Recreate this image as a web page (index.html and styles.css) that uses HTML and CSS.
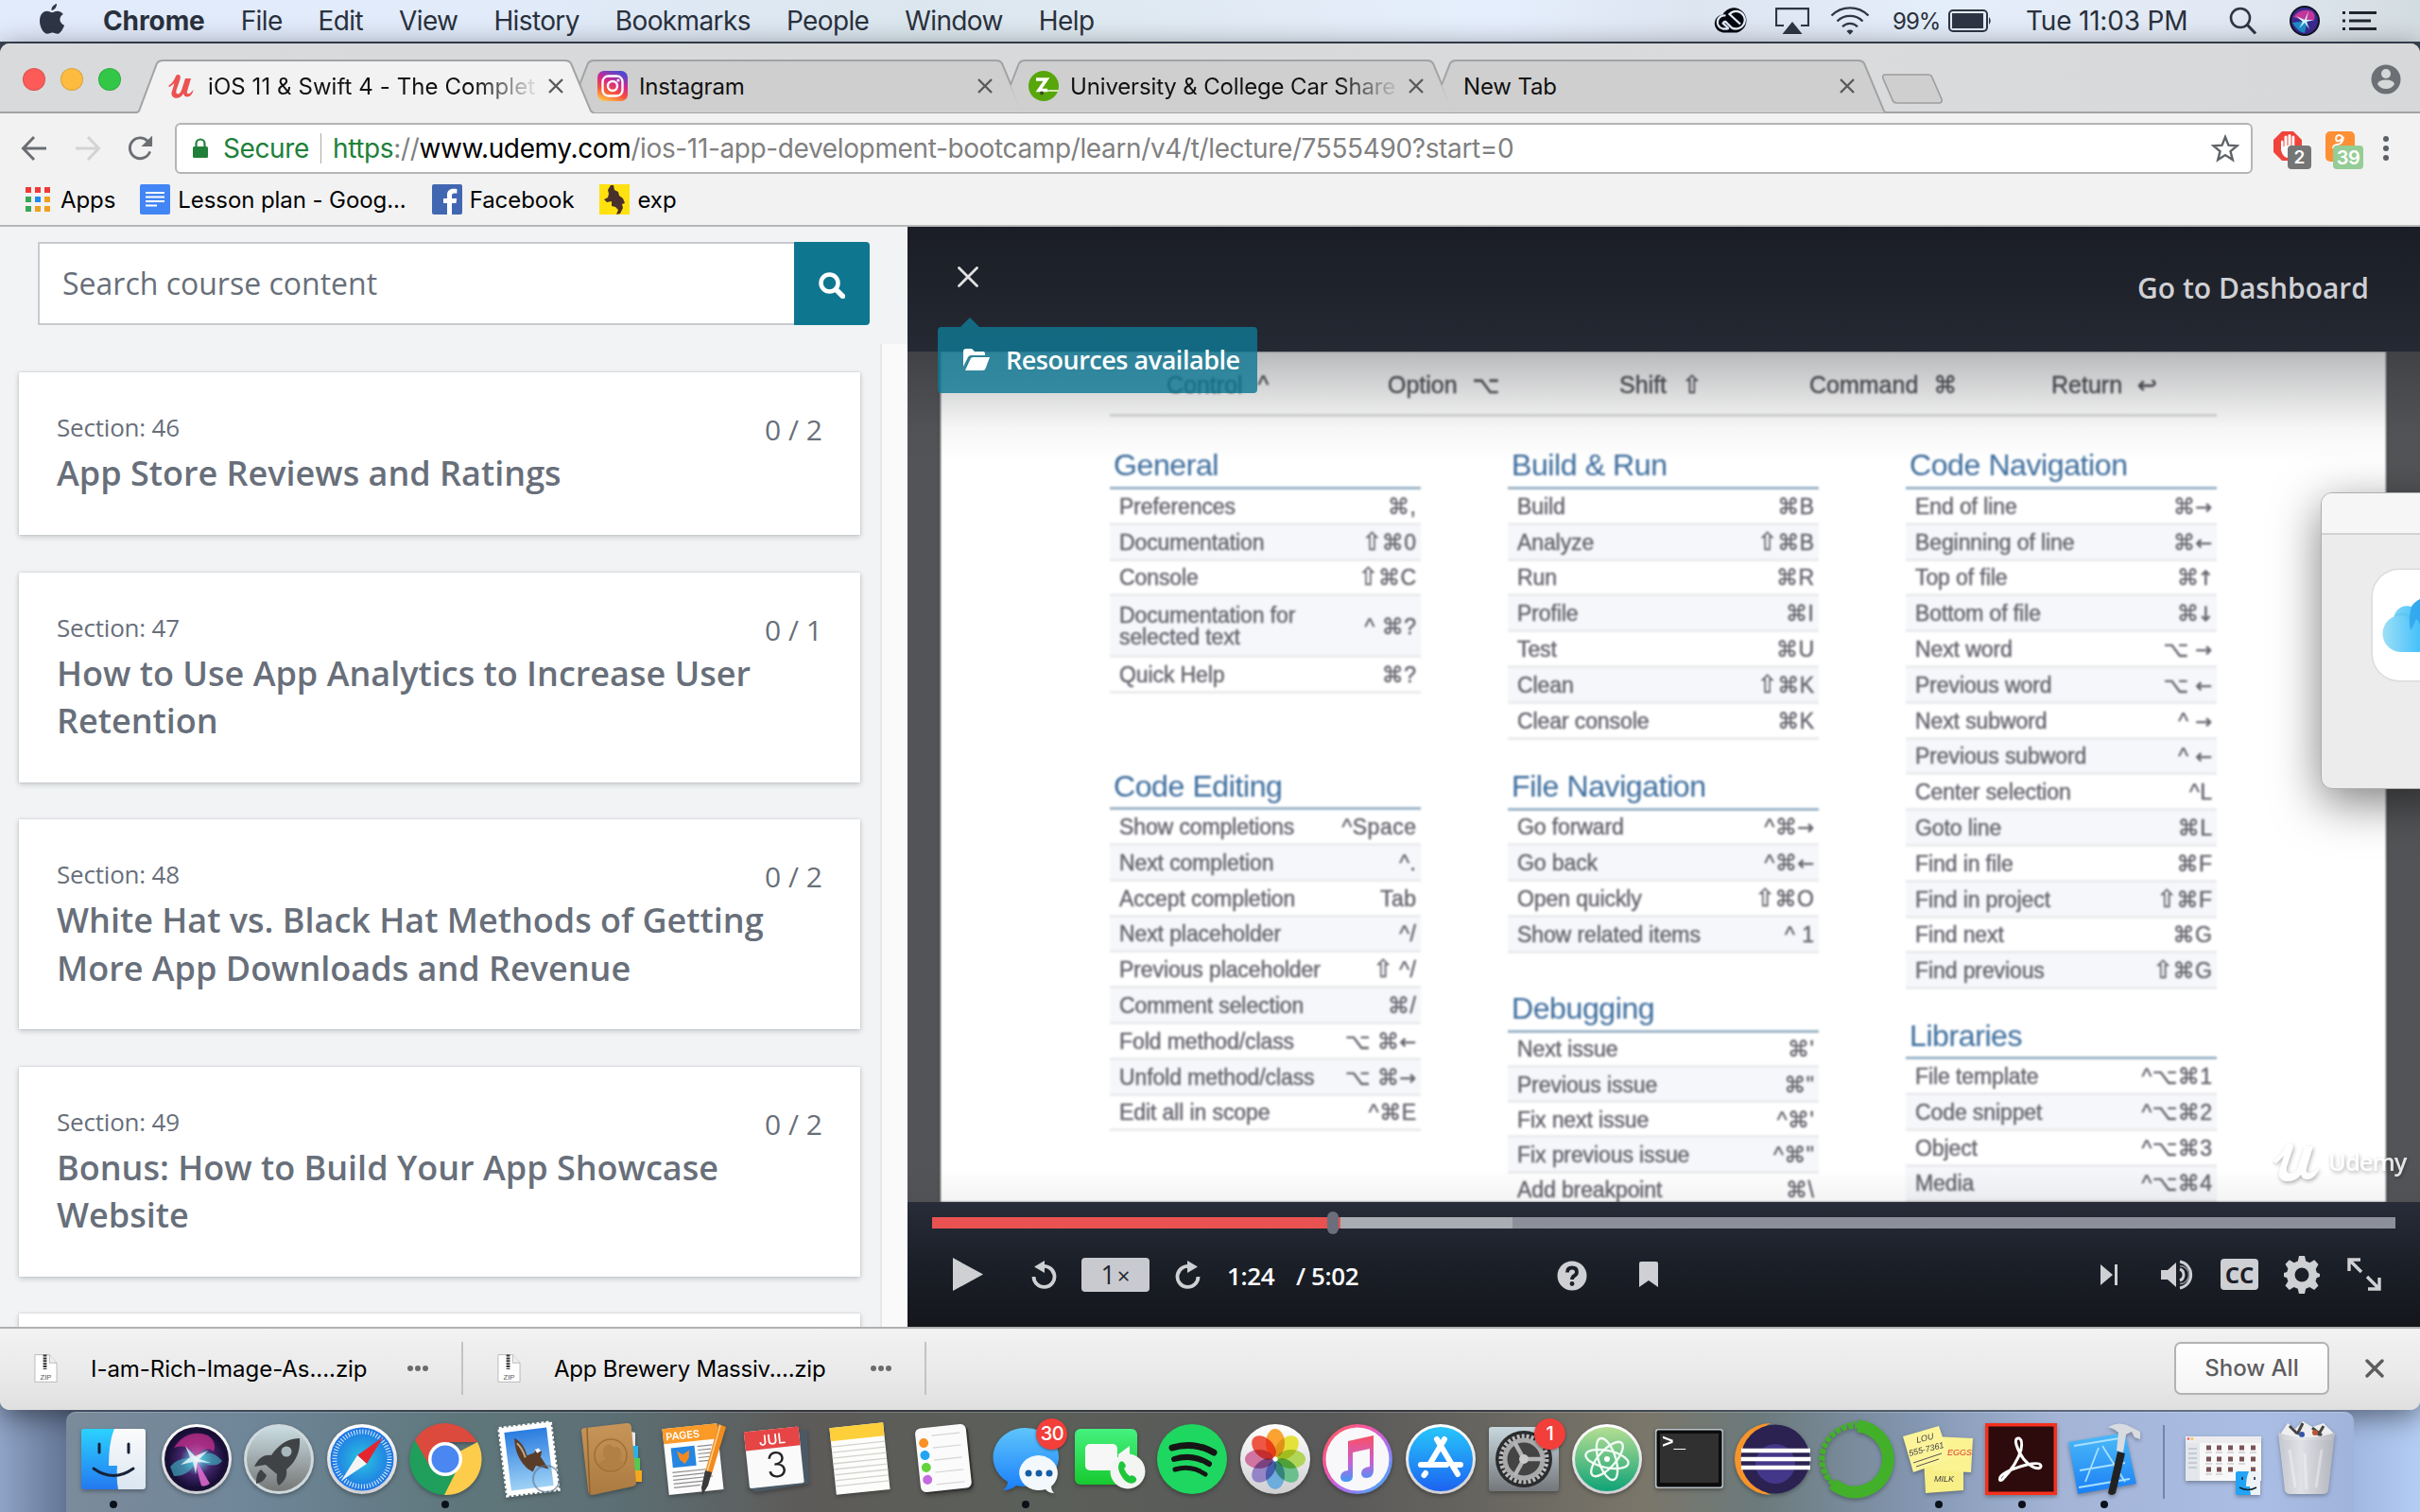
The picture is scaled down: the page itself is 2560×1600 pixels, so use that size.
FILE: index.html
```html
<!DOCTYPE html>
<html lang="en">
<head>
<meta charset="utf-8">
<title>iOS 11 &amp; Swift 4 - The Complete iOS App Development Bootcamp</title>
<link rel="stylesheet" href="styles.css">
</head>
<body>
<svg width="0" height="0" class="defs">
  <defs>
    <linearGradient id="g-finder" x1="0" y1="0" x2="0" y2="1"><stop offset="0" stop-color="#2bd2ff"/><stop offset="1" stop-color="#2479f0"/></linearGradient>
    <linearGradient id="g-face" x1="0" y1="0" x2="0" y2="1"><stop offset="0" stop-color="#fbfbfc"/><stop offset="1" stop-color="#dbe6f1"/></linearGradient>
    <radialGradient id="g-siri"><stop offset="0" stop-color="#e9fbff"/><stop offset=".2" stop-color="#5f9fc8"/><stop offset=".55" stop-color="#43256b"/><stop offset="1" stop-color="#150d33"/></radialGradient>
    <linearGradient id="g-rocket" x1="0" y1="0" x2="0" y2="1"><stop offset="0" stop-color="#c9dce2"/><stop offset="1" stop-color="#767776"/></linearGradient>
    <radialGradient id="g-safari2"><stop offset="0" stop-color="#29c5e0"/><stop offset="1" stop-color="#1f74e4"/></radialGradient>
    <linearGradient id="g-sky" x1="0" y1="0" x2="0" y2="1"><stop offset="0" stop-color="#2a7ce0"/><stop offset="1" stop-color="#9fd2f5"/></linearGradient>
    <linearGradient id="g-book" x1="0" y1="0" x2="0" y2="1"><stop offset="0" stop-color="#c79558"/><stop offset="1" stop-color="#ab7a41"/></linearGradient>
    <linearGradient id="g-msg" x1="0" y1="0" x2="0" y2="1"><stop offset="0" stop-color="#5ec5fb"/><stop offset="1" stop-color="#1a7ffb"/></linearGradient>
    <linearGradient id="g-ft" x1="0" y1="0" x2="0" y2="1"><stop offset="0" stop-color="#45f27f"/><stop offset="1" stop-color="#17c92f"/></linearGradient>
    <linearGradient id="g-ring" x1="0" y1="0" x2="1" y2="1"><stop offset="0" stop-color="#fb5f4e"/><stop offset=".35" stop-color="#f556a3"/><stop offset=".6" stop-color="#b06bf2"/><stop offset="1" stop-color="#25c1fb"/></linearGradient>
    <linearGradient id="g-note" x1="0" y1="0" x2="0" y2="1"><stop offset="0" stop-color="#fb4f61"/><stop offset=".6" stop-color="#c561d8"/><stop offset="1" stop-color="#3d9cf8"/></linearGradient>
    <linearGradient id="g-store" x1="0" y1="0" x2="0" y2="1"><stop offset="0" stop-color="#27c6fb"/><stop offset="1" stop-color="#1c63f0"/></linearGradient>
    <linearGradient id="g-pref" x1="0" y1="0" x2="0" y2="1"><stop offset="0" stop-color="#c8d7de"/><stop offset="1" stop-color="#74777b"/></linearGradient>
    <linearGradient id="g-atom" x1="0" y1="0" x2="0" y2="1"><stop offset="0" stop-color="#b5de93"/><stop offset="1" stop-color="#10a377"/></linearGradient>
    <linearGradient id="g-blue" x1="0" y1="0" x2="0" y2="1"><stop offset="0" stop-color="#4dbbf8"/><stop offset="1" stop-color="#1a7ff5"/></linearGradient>
    <linearGradient id="g-insta" x1=".2" y1="1" x2=".6" y2="0"><stop offset="0" stop-color="#fdc84f"/><stop offset=".35" stop-color="#f7513b"/><stop offset=".65" stop-color="#d2278f"/><stop offset="1" stop-color="#5148d0"/></linearGradient>
    <linearGradient id="g-can" x1="0" y1="0" x2="1" y2="0"><stop offset="0" stop-color="#c9cbd0"/><stop offset=".4" stop-color="#e6e7ea"/><stop offset="1" stop-color="#b5b7bd"/></linearGradient>
    <linearGradient id="g-cloud" x1="0" y1="0" x2="1" y2="0"><stop offset="0" stop-color="#9ddff5"/><stop offset="1" stop-color="#45c1fc"/></linearGradient>
    <linearGradient id="g-edge" x1="0" y1="0" x2="0" y2="1"><stop offset="0" stop-color="#fff"/><stop offset="1" stop-color="#cfcfd2"/></linearGradient>
  </defs>
</svg>

<header class="menubar">
  <svg class="apple" viewBox="0 0 26 32"><path d="M18 0c.3 3-2.300 7-5.500 7C12 4 15 .5 18 0zM13 9.300c1.500 0 3-1.600 5.800-1.600 2.400 0 4.700 1.300 6 3.400-5 3-4.300 9.600 1.200 11.600-1.500 4.300-4.300 9.100-7.300 9.100-2 0-2.800-1.300-5.300-1.300s-3.400 1.300-5.300 1.300C4 31.800 0 24.500 0 18.500 0 11 4 7.800 7.700 7.800c2.400 0 4.200 1.500 5.300 1.500z" fill="#2e3645"/></svg>
  <nav class="menus"><b>Chrome</b><span>File</span><span>Edit</span><span>View</span><span>History</span><span>Bookmarks</span><span>People</span><span>Window</span><span>Help</span></nav>
  <div class="status">
    <svg class="s-cc" width="40" height="28" viewBox="0 0 40 28"><path d="M10.500 8.200A13.300 13.300 0 1 1 25.500 27.500H10.500a9.700 9.700 0 0 1 0-19.300z" fill="#05070f"/><path d="M13.500 9.500A6.800 6.800 0 0 0 10.500 23.500H15q2 0 .5-1.500L11 17.800M10.500 18.500a2.500 2.500 0 0 1 3-2.500l6.500 6.500q1.500 1 4.500 1a9.300 9.300 0 1 0-7-15.500L29 18.500" fill="none" stroke="#e4edfb" stroke-width="2.300"/></svg>
    <svg class="s-air" width="36" height="28" viewBox="0 0 36 28"><path d="M9 19H1V1.200h34V19H27" fill="none" stroke="#2e3645" stroke-width="2.200"/><path d="M18 15l10.500 13h-21z" fill="#2e3645"/></svg>
    <svg class="s-wifi" width="42" height="30" viewBox="0 0 42 30"><g fill="none" stroke="#2e3645" stroke-width="2.400"><path d="M1.500 9.500a27.500 27.500 0 0 1 39 0"/><path d="M7.500 15.500a19 19 0 0 1 27 0"/><path d="M13 21.300a11 11 0 0 1 16 0"/></g><path d="M17.500 26a5 5 0 0 1 7 0l-3.500 3.800z" fill="#2e3645"/></svg>
    <span class="s-pct">99%</span>
    <svg class="s-bat" width="47" height="24" viewBox="0 0 47 24"><rect x="1" y="1" width="40" height="22" rx="4" fill="none" stroke="#2e3645" stroke-width="2"/><rect x="4" y="4" width="33" height="16" fill="#2e3645"/><path d="M43 8q3.500 4 0 8z" fill="#2e3645"/></svg>
    <span class="s-time">Tue 11:03 PM</span>
    <svg class="s-find" width="30" height="30" viewBox="0 0 30 30"><circle cx="12" cy="12" r="10" fill="none" stroke="#2e3645" stroke-width="2.600"/><path d="M19 19l9 9.500" stroke="#2e3645" stroke-width="3.200"/></svg>
    <svg class="s-siri" width="32" height="32" viewBox="0 0 32 32"><circle cx="16" cy="16" r="16" fill="#11131f"/><circle cx="16" cy="16" r="14" fill="#3a2a8f"/><path d="M4 12Q12 2 24 6q4 4 2 9l-10 1z" fill="#c2379a"/><path d="M3 18q6 10 13 11l3-13z" fill="#1d8ec9"/><path d="M7 11l9 4 4-9-2 9 8 0-8 2 3 8-5-7-6 6 4-7z" fill="#d8f7ff"/></svg>
    <svg class="s-list" width="36" height="20" viewBox="0 0 36 20"><path d="M0 1.500h3M0 10h3M0 18.500h3M7 1.500h29M7 10h23M7 18.500h29" stroke="#20252f" stroke-width="3"/></svg>
  </div>
</header>

<main class="window">
  <div class="tabstrip">
    <div class="lights"><i class="red"></i><i class="amber"></i><i class="green"></i></div>
    <div class="tab active">
      <svg class="shape" viewBox="0 0 484 57"><path d="M0 57Q3 56 4 52L22 4Q24 1 28 1H454Q458 1 460 4L480 52Q481 56 484 57z" fill="#f2f2f2"/><path d="M0 56Q3 56 4 52L22 4Q24 1 28 1H454Q458 1 460 4L480 52Q481 56 484 56" fill="none" stroke="#a2a3a4" stroke-width="2"/></svg>
      <svg class="fav" viewBox="0 0 32 32"><path d="M2 16C6 14 9 8 10 5.500c2-2.500 6-2 4.500 3.500l-4 11.500c-1 5.500 3.500 5 5.500 0L20 8h6l-4 13.500c-1 3.500 2.500 4 6.500-1.500-1 8-9 10-10.500 4-3 7-13.500 6-12.500-1l3-10-5 4z" fill="#ec5252"/></svg>
      <span class="label fade">iOS 11 &amp; Swift 4 - The Complet</span>
      <svg class="x" viewBox="0 0 16 16"><path d="M1 1l14 14M15 1L1 15" /></svg>
    </div>
    <div class="tab">
      <svg class="shape" viewBox="0 0 484 57"><path d="M13 27L22 4Q24 1 28 1H454Q458 1 460 4L480 52Q481 56 484 56H24z" fill="#cfcfcf"/><path d="M13 27L22 4Q24 1 28 1H454Q458 1 460 4L480 52Q481 56 484 56" fill="none" stroke="#a2a3a4" stroke-width="2"/></svg>
      <svg class="fav" viewBox="0 0 32 32"><rect width="32" height="32" rx="7" fill="url(#g-insta)"/><g fill="none" stroke="#fff" stroke-width="2.400"><rect x="5.500" y="5.500" width="21" height="21" rx="6"/><circle cx="16" cy="16" r="5"/></g><circle cx="22" cy="10" r="1.600" fill="#fff"/></svg>
      <span class="label">Instagram</span>
      <svg class="x" viewBox="0 0 16 16"><path d="M1 1l14 14M15 1L1 15" /></svg>
    </div>
    <div class="tab">
      <svg class="shape" viewBox="0 0 484 57"><path d="M13 27L22 4Q24 1 28 1H454Q458 1 460 4L480 52Q481 56 484 56H24z" fill="#cfcfcf"/><path d="M13 27L22 4Q24 1 28 1H454Q458 1 460 4L480 52Q481 56 484 56" fill="none" stroke="#a2a3a4" stroke-width="2"/></svg>
      <svg class="fav" viewBox="0 0 32 32"><circle cx="16" cy="16" r="16" fill="#57a60a"/><path d="M8 9h11L11 20.500h9" fill="none" stroke="#fff" stroke-width="3.600"/><path d="M20 21h12" stroke="#cfe6b4" stroke-width="2"/><circle cx="14" cy="23.500" r="2" fill="#3b4a2a"/></svg>
      <span class="label fade">University &amp; College Car Share</span>
      <svg class="x" viewBox="0 0 16 16"><path d="M1 1l14 14M15 1L1 15" /></svg>
    </div>
    <div class="tab plain">
      <svg class="shape" viewBox="0 0 484 57"><path d="M13 27L22 4Q24 1 28 1H454Q458 1 460 4L480 52Q481 56 484 56H24z" fill="#cfcfcf"/><path d="M13 27L22 4Q24 1 28 1H454Q458 1 460 4L480 52Q481 56 484 56" fill="none" stroke="#a2a3a4" stroke-width="2"/></svg>
      <span class="label">New Tab</span>
      <svg class="x" viewBox="0 0 16 16"><path d="M1 1l14 14M15 1L1 15" /></svg>
    </div>
    <svg class="newtab" viewBox="0 0 66 32"><path d="M4 1H50q3 0 4 3L64 27q1 4-3 4H17q-4 0-5-3L2 5Q1 1 4 1z" fill="#cfcfcf" stroke="#9d9d9e" stroke-width="1.600"/></svg>
    <svg class="person" viewBox="0 0 32 32"><circle cx="16" cy="16" r="15.500" fill="#6c7075"/><circle cx="16" cy="10" r="5" fill="#d6d7d9"/><path d="M7 21q1-4.500 9-4.500t9 4.500q-3 5-9 5t-9-5z" fill="#d6d7d9"/></svg>
  </div>

  <div class="toolbar">
    <svg class="nav-i" viewBox="0 0 28 28"><path d="M27 14H3M14 2L2.500 14 14 26" fill="none" stroke="#6b6e72" stroke-width="3"/></svg>
    <svg class="nav-i fwd" viewBox="0 0 28 28"><path d="M1 14h24M14 2l11.500 12L14 26" fill="none" stroke="#d2d3d4" stroke-width="3"/></svg>
    <svg class="nav-i rel" viewBox="0 0 28 28"><path d="M24.500 17.500A11.300 11.300 0 1 1 22 6" fill="none" stroke="#6b6e72" stroke-width="3"/><path d="M27 0v12H15z" fill="#6b6e72"/></svg>
    <div class="omnibox">
      <svg class="lock" viewBox="0 0 16 22"><rect y="9" width="16" height="12" rx="1.500" fill="#208039"/><path d="M3.500 10V6a4.500 4.500 0 0 1 9 0v4" fill="none" stroke="#208039" stroke-width="2.200"/></svg>
      <span class="secure">Secure</span><i class="bar"></i>
      <span class="url"><em>https</em>://<b>www.udemy.com</b>/ios-11-app-development-bootcamp/learn/v4/t/lecture/7555490?start=0</span>
      <svg class="star" viewBox="0 0 30 30"><path d="M15 3l3.400 8.600 9.200.6-7.100 5.900 2.300 9L15 22.100 7.200 27.100l2.300-9L2.400 12.200l9.200-.6z" fill="none" stroke="#5f6368" stroke-width="2.400"/></svg>
    </div>
    <span class="ext"><svg viewBox="0 0 32 32"><path d="M9 0h12l9 9v13l-9 9H9l-9-9V9z" fill="#f0443b"/><path d="M8 20v-9q0-1.500 1.200-1.500T10.500 11v5h1V6q0-1.500 1.500-1.500T14.500 6v9h1V4.500Q15.500 3 17 3t1.500 1.500V15h1V6q0-1.500 1.400-1.500T22.300 6v13q0 9-7 9-5 0-7.300-8z" fill="#fff"/></svg><b>2</b></span>
    <span class="ext orange"><svg viewBox="0 0 32 32"><rect width="31" height="32" rx="5" fill="#ff8f35"/><path d="M18 7a3.500 3.500 0 1 0-6 3q4 1 7-4-1 8-7 8-4 1-4 4" fill="none" stroke="#fff" stroke-width="2"/></svg><b>39</b></span>
    <svg class="dots" viewBox="0 0 6 28"><circle cx="3" cy="4" r="3"/><circle cx="3" cy="14" r="3"/><circle cx="3" cy="24" r="3"/></svg>
  </div>

  <div class="bookmarks">
    <svg class="apps" viewBox="0 0 26 26"><g fill="#f03a37"><path d="M0 0h6v6H0zM10 0h6v6h-6zM20 0h6v6h-6z"/></g><path d="M0 10h6v6H0zM0 20h6v6H0z" fill="#3aa757"/><path d="M10 10h6v6h-6z" fill="#1e8bf0"/><path d="M20 10h6v6h-6zM10 20h6v6h-6zM20 20h6v6h-6z" fill="#f0a01e"/></svg><span>Apps</span>
    <svg class="bm-i doc" viewBox="0 0 32 32"><rect width="32" height="32" rx="2" fill="#4285f4"/><path d="M6 9h20M6 13.500h20M6 18h20M6 22.500h12" stroke="#fff" stroke-width="2.200"/></svg><span>Lesson plan - Goog...</span>
    <svg class="bm-i fb" viewBox="0 0 32 32"><rect width="32" height="32" rx="2" fill="#4267b2"/><path d="M21 32V20h4.500l.7-5H21v-3c0-1.600.6-2.600 2.800-2.600h2.600V5c-.6 0-2-.2-3.800-.2-4 0-6.600 2.400-6.600 6.600V15h-4v5h4v12z" fill="#fff"/></svg><span>Facebook</span>
    <svg class="bm-i wy" viewBox="0 0 32 32"><rect width="32" height="32" fill="#ffe110"/><path d="M12 1l3 0 1 5 4 2 1 4 4 3 2 5-3 1 1 4-3 6-4 1 2-5-3-3-4-1 0-5-5 1-3-3 4-2 1-4-1-4z" fill="#49302a"/></svg><span>exp</span>
  </div>

  <div class="content">
    <aside class="sidebar">
      <div class="search"><div class="field">Search course content</div><div class="go"><svg viewBox="0 0 28 28"><circle cx="11.500" cy="11.500" r="9" fill="none" stroke="#fff" stroke-width="4.500"/><path d="M18.500 18.500l7 7" stroke="#fff" stroke-width="5.500" stroke-linecap="round"/></svg></div></div>
      <div class="scroll">
        <div class="cards">
          <section class="card"><small>Section: 46</small><span class="count">0 / 2</span><h2>App Store Reviews and Ratings</h2></section>
          <section class="card"><small>Section: 47</small><span class="count">0 / 1</span><h2>How to Use App Analytics to Increase User Retention</h2></section>
          <section class="card"><small>Section: 48</small><span class="count">0 / 2</span><h2>White Hat vs. Black Hat Methods of Getting More App Downloads and Revenue</h2></section>
          <section class="card"><small>Section: 49</small><span class="count">0 / 2</span><h2>Bonus: How to Build Your App Showcase Website</h2></section>
          <section class="card"></section>
        </div>
        <div class="track"></div>
      </div>
    </aside>

    <section class="player">
      <header class="p-head">
        <svg class="p-x" viewBox="0 0 22 22"><path d="M1.500 1.500l19 19M20.500 1.500l-19 19" stroke="#e2e2e4" stroke-width="2.800" stroke-linecap="round"/></svg>
        <span>Go to Dashboard</span>
      </header>
      <div class="video">
        <div class="sheet">
          <div class="legend"><span>Control <k>^</k></span><span>Option <k>⌥</k></span><span>Shift <k><u>⇧</u></k></span><span>Command <k>⌘</k></span><span>Return <k>↩</k></span></div>
          <div class="columns">
            <div class="col">
              <h3>General</h3>
              <ul><li>Preferences<k>⌘,</k></li><li>Documentation<k><u>⇧</u>⌘0</k></li><li>Console<k><u>⇧</u>⌘C</k></li><li class="tall"><span>Documentation for<br>selected text</span><k>^ ⌘?</k></li><li>Quick Help<k>⌘?</k></li></ul>
              <h3 class="gap-a">Code Editing</h3>
              <ul><li>Show completions<k>^Space</k></li><li>Next completion<k>^.</k></li><li>Accept completion<k>Tab</k></li><li>Next placeholder<k>^/</k></li><li>Previous placeholder<k><u>⇧</u> ^/</k></li><li>Comment selection<k>⌘/</k></li><li>Fold method/class<k>⌥ ⌘<s>←</s></k></li><li>Unfold method/class<k>⌥ ⌘<s>→</s></k></li><li>Edit all in scope<k>^⌘E</k></li></ul>
            </div>
            <div class="col">
              <h3>Build &amp; Run</h3>
              <ul><li>Build<k>⌘B</k></li><li>Analyze<k><u>⇧</u>⌘B</k></li><li>Run<k>⌘R</k></li><li>Profile<k>⌘I</k></li><li>Test<k>⌘U</k></li><li>Clean<k><u>⇧</u>⌘K</k></li><li>Clear console<k>⌘K</k></li></ul>
              <h3 class="gap-b">File Navigation</h3>
              <ul><li>Go forward<k>^⌘<s>→</s></k></li><li>Go back<k>^⌘<s>←</s></k></li><li>Open quickly<k><u>⇧</u>⌘O</k></li><li>Show related items<k>^ 1</k></li></ul>
              <h3 class="gap-c">Debugging</h3>
              <ul class="tight"><li>Next issue<k>⌘'</k></li><li>Previous issue<k>⌘"</k></li><li>Fix next issue<k>^⌘'</k></li><li>Fix previous issue<k>^⌘"</k></li><li>Add breakpoint<k>⌘\</k></li></ul>
            </div>
            <div class="col">
              <h3>Code Navigation</h3>
              <ul><li>End of line<k>⌘<s>→</s></k></li><li>Beginning of line<k>⌘<s>←</s></k></li><li>Top of file<k>⌘<s class="v">↑</s></k></li><li>Bottom of file<k>⌘<s class="v">↓</s></k></li><li>Next word<k>⌥ <s>→</s></k></li><li>Previous word<k>⌥ <s>←</s></k></li><li>Next subword<k>^ <s>→</s></k></li><li>Previous subword<k>^ <s>←</s></k></li><li>Center selection<k>^L</k></li><li>Goto line<k>⌘L</k></li><li>Find in file<k>⌘F</k></li><li>Find in project<k><u>⇧</u>⌘F</k></li><li>Find next<k>⌘G</k></li><li>Find previous<k><u>⇧</u>⌘G</k></li></ul>
              <h3 class="gap-d">Libraries</h3>
              <ul><li>File template<k>^⌥⌘1</k></li><li>Code snippet<k>^⌥⌘2</k></li><li>Object<k>^⌥⌘3</k></li><li>Media<k>^⌥⌘4</k></li></ul>
            </div>
          </div>
        </div>
        <div class="shade"></div>
        <div class="mark"><svg viewBox="0 0 52 42"><path d="M1 20C8 17 13 9 15 4c4-4 10-2 7 5l-6 18c-2 9 8 9 12 0L35 5h9l-7 23c-2 7 5 7 13-1-2 14-17 17-19 8-7 11-27 9-23-4l5-16-8 8z" fill="#fff"/></svg><span>Udemy</span></div>
      </div>
      <div class="controls">
        <div class="progress"><i class="played"></i><i class="loaded"></i><i class="knob"></i></div>
        <div class="buttons">
          <svg class="c-play" width="32" height="35" viewBox="0 0 32 35"><path d="M0 0l32 17.500L0 35z"/></svg>
          <svg class="c-rew" width="28" height="30" viewBox="0 0 28 30"><path d="M10 6.500A11 11 0 1 1 2.500 17" fill="none" stroke="#cfd0d4" stroke-width="3.800"/><path d="M14 0v13L3 6.500z"/></svg>
          <span class="rate">1<small>×</small></span>
          <svg class="c-fwd" width="28" height="30" viewBox="0 0 28 30"><path d="M18 6.500A11 11 0 1 0 25.500 17" fill="none" stroke="#cfd0d4" stroke-width="3.800"/><path d="M14 0v13l11-6.500z"/></svg>
          <span class="now">1:24</span><span class="total">/ 5:02</span>
          <svg class="c-help" width="32" height="32" viewBox="0 0 32 32"><circle cx="16" cy="16" r="15.500"/><path d="M11 12.500q0-5 5-5t5 4.500q0 2.500-2.500 4T16 20" fill="none" stroke="#1b1f28" stroke-width="3.800"/><circle cx="16" cy="24.500" r="2.400" fill="#1b1f28"/></svg>
          <svg class="c-mark" width="20" height="27" viewBox="0 0 20 27"><path d="M2 0h16q2 0 2 2v25l-10-7-10 7V2q0-2 2-2z"/></svg>
          <svg class="c-next" width="18" height="22" viewBox="0 0 18 22"><path d="M0 0l13 11L0 22zM15 0h3v22h-3z"/></svg>
          <svg class="c-vol" width="36" height="32" viewBox="0 0 36 32"><path d="M0 11h7l9-8v26l-9-8H0z"/><path d="M20 10a6.500 6.500 0 0 1 0 12M20 2a14 14.200 0 0 1 0 28" fill="none" stroke="#cfd0d4" stroke-width="3"/><path d="M20 6.500a9.500 9.500 0 0 1 0 19" fill="none" stroke="#8f9299" stroke-width="1.500"/></svg>
          <span class="cc">CC</span>
          <svg class="c-gear" width="38" height="40" viewBox="0 0 38 40"><path d="M16 0h6l1.300 5.600 4 1.700 5-3 4.200 4.600-2.800 5 1 3.600L38 19v3l-3.300 1.200-1.200 3.500 3 4.800-4.300 4.600-5-3-4 1.700L22 40h-6l-1.300-5.200-4-1.700-5 3-4.200-4.600 2.900-4.800-1.200-3.500L0 22v-4l3.300-1.100 1.100-3.400-2.900-4.700L5.800 4.300l5 3 4-1.700z"/><circle cx="19" cy="20" r="7.500" fill="#1b1f28"/></svg>
          <svg class="c-full" width="36" height="35" viewBox="0 0 36 35"><path d="M2 14V2h12M2 2l13 13M34 21v12H22M34 33L21 20" fill="none" stroke="#cfd0d4" stroke-width="3.400"/></svg>
        </div>
      </div>
      <div class="tip"><svg viewBox="0 0 28 23"><path d="M0 19V3q0-3 3-3h6l3 3h9q2 0 2 2v2H8Q6 7 5 9z" fill="#fff"/><path d="M2 23L7.500 11q.5-2 3-2H28l-4.500 12q-.5 2-3 2z" fill="#fff"/></svg>Resources available</div>
    </section>
  </div>

  <footer class="downloads">
    <svg class="zip" viewBox="0 0 26 32"><path d="M1 1h16l8 9v21H1z" fill="#fff" stroke="#b9b9b9"/><path d="M17 1v9h8" fill="#eee" stroke="#b9b9b9"/><path d="M12 1v16" stroke="#333" stroke-width="4" stroke-dasharray="2 1"/><text x="13" y="28.500" text-anchor="middle">ZIP</text></svg>
    <span class="file">I-am-Rich-Image-As....zip</span><span class="more"><i></i><i></i><i></i></span><i class="sep"></i>
    <svg class="zip" viewBox="0 0 26 32"><path d="M1 1h16l8 9v21H1z" fill="#fff" stroke="#b9b9b9"/><path d="M17 1v9h8" fill="#eee" stroke="#b9b9b9"/><path d="M12 1v16" stroke="#333" stroke-width="4" stroke-dasharray="2 1"/><text x="13" y="28.500" text-anchor="middle">ZIP</text></svg>
    <span class="file narrow">App Brewery Massiv....zip</span><span class="more"><i></i><i></i><i></i></span><i class="sep"></i>
    <span class="showall">Show All</span>
    <svg class="dl-x" viewBox="0 0 20 20"><path d="M2 2l16 16M18 2L2 18" stroke="#5c5c5c" stroke-width="3.400" stroke-linecap="round"/></svg>
  </footer>
</main>

<div class="popup">
  <div class="pop-bar"></div>
  <div class="pop-icon"><svg viewBox="0 0 50 116"><path d="M30.500 87a19.500 19.500 0 0 1-8-37.500A14 14 0 0 1 41 39q3-5 9-8v56z" fill="url(#g-cloud)"/><path d="M22.500 49.500A19.500 19.500 0 0 1 46 58 14 14 0 0 0 22.500 49.500z" fill="#4fbfe9" opacity=".5"/><path d="M41 39q3-5 9-8v28q-1-5-4-7-3 8-6 12-3-12 1-25z" fill="#239bea" opacity=".65"/></svg></div>
</div>

<footer class="dock">
  <div class="app run"><svg viewBox="0 0 76 76"><rect x="4" y="6" width="68" height="64" rx="3" fill="url(#g-finder)"/><path d="M39 6h30q3 0 3 3v58q0 3-3 3H43q-2-10-1-25h-9Q33 20 39 6z" fill="url(#g-face)"/><path d="M23 22v9M54 22v9" stroke="#172238" stroke-width="3" stroke-linecap="round"/><path d="M17 48q21 15 42 0" fill="none" stroke="#172238" stroke-width="3" stroke-linecap="round"/></svg></div>
  <div class="app"><svg viewBox="0 0 76 76"><circle cx="38" cy="38" r="37" fill="url(#g-edge)"/><circle cx="38" cy="38" r="34" fill="#171034"/><circle cx="38" cy="38" r="31" fill="url(#g-siri)"/><path d="M14 26Q28 5 50 13 60 20 56 30 46 22 38 38 30 20 14 26z" fill="#d0308e" opacity=".7"/><path d="M10 46q10-12 28-8 14-14 27 2-8 10-27-2-6 18-24 18z" fill="#3fd0d6" opacity=".55"/><path d="M37 38q8 14 15 26-6 4-9 2-4-12-6-28z" fill="#f172d8" opacity=".8"/><path d="M26 24l10 11 14-6-9 9 12 4-14-1-2 13-3-13-13 3 10-8z" fill="#fff" opacity=".75"/></svg></div>
  <div class="app"><svg viewBox="0 0 76 76"><circle cx="38" cy="38" r="37" fill="#cfd9dc"/><circle cx="38" cy="38" r="34" fill="url(#g-rocket)"/><path d="M60 16c-14 0-23 8-30 18-9-1-14 4-18 12l12-2 12 10c0 5-1 8 2 12 7-5 9-11 8-17 10-8 15-19 14-33zM19 49c-4 3-5 8-5 15 5-1 9-3 11-9z" fill="#3f4346"/><circle cx="46" cy="30" r="5.500" fill="#a9b8bc"/></svg></div>
  <div class="app"><svg viewBox="0 0 76 76"><circle cx="38" cy="38" r="37" fill="url(#g-edge)"/><circle cx="38" cy="38" r="33.500" fill="url(#g-safari2)"/><circle cx="38" cy="38" r="29" fill="none" stroke="#dff3ff" stroke-width="5" stroke-dasharray="1 2.040"/><path d="M60 15L43 43l-10-9z" fill="#e5252d"/><path d="M16 61l17-27 10 9z" fill="#f4f4f4"/></svg></div>
  <div class="app run"><svg viewBox="0 0 76 76"><path d="M38 38l34-18A38 38 0 0 1 37 76z" fill="#fecc4b"/><path d="M38 38l14 8L37 76A38 38 0 0 1 6 18z" fill="#1f9e5c"/><path d="M38 20h33.500Q62 2 38 0 16 1 6 18l16 28z" fill="#dc4a3d"/><circle cx="38" cy="38" r="18" fill="#fff"/><circle cx="38" cy="38" r="14.500" fill="#4a87f0"/></svg></div>
  <div class="app"><svg viewBox="0 0 76 76"><g transform="rotate(-7 38 38)"><rect x="11" y="2" width="55" height="72" fill="#fff" stroke="#fff" stroke-width="3" stroke-dasharray="3 2"/><rect x="16" y="7" width="45" height="62" fill="url(#g-sky)"/><path d="M26 14q9 6 11 20l8-2 3-4 5 4-2 5 7 14-13-5-4 6-5-4q-12-14-10-34z" fill="#5a3d28"/><path d="M28 20q5 6 7 16" stroke="#c3a684" stroke-width="2" fill="none"/><path d="M46 29l4-1 2 3-4 2z" fill="#fff"/></g><circle cx="57" cy="59" r="14" fill="none" stroke="#5c7690" stroke-width="2" opacity=".6"/></svg></div>
  <div class="app"><svg viewBox="0 0 76 76"><path d="M56 8l8 2v17H56z" fill="#e8e8e8"/><path d="M58 24h9v13h-9z" fill="#25b3e8"/><path d="M60 37h9v13H60z" fill="#58c950"/><path d="M60 50h11v12H58z" fill="#f4a81d"/><path d="M7 8q0-3 4-3l44-5q5 0 5 5l5 58q0 3-4 4l-42 9q-5 0-5-5z" fill="url(#g-book)"/><path d="M13 5l3 70" stroke="#8c6231" stroke-width="1.500"/><circle cx="38" cy="34" r="17" fill="none" stroke="#a07039" stroke-width="1.600"/><path d="M25 44q4-5 8-6-6-6-1-14 6-4 9 2 6-3 8 4 1 6-2 9 4 1 5 5-12 12-27 0z" fill="#b08045"/></svg></div>
  <div class="app"><svg viewBox="0 0 76 76"><g transform="rotate(-6 38 38)"><rect x="8" y="3" width="58" height="70" fill="#fcfcfc"/><rect x="8" y="3" width="58" height="16" fill="#fb9a27"/><text x="11" y="15.500" class="pages">PAGES</text><rect x="15" y="24" width="25" height="21" fill="#2585e0"/><path d="M21 28l6 4 7-4-1 8-5 6-5-5z" fill="#f38a20"/><path d="M43 25h16M43 29h14M43 33h16M43 37h12M43 41h16M14 50h40M14 54h38M14 58h42M14 62h34M14 66h28" stroke="#8d8d8d" stroke-width="1.200"/></g><path d="M64 1l8 3-16 53-7-2z" fill="#f18c1e"/><path d="M66 2l-15 53" stroke="#ffd08c" stroke-width="1.500"/><path d="M50 50l7 2-4 14-6 10-1-8z" fill="#3b3b3d"/></svg></div>
  <div class="app"><svg viewBox="0 0 76 76"><path d="M64 8l6-2 2 58-56 9-10-5z" fill="#4b5965"/><g transform="rotate(-6 38 38)"><rect x="6" y="6" width="58" height="60" rx="2" fill="#fafafa"/><path d="M6 6h58v20H6z" fill="#e64545"/><text x="35" y="22" class="month" text-anchor="middle">JUL</text><text x="37" y="57" class="day" text-anchor="middle">3</text></g></svg></div>
  <div class="app"><svg viewBox="0 0 76 76"><g transform="rotate(-6 38 38)"><rect x="9" y="2" width="57" height="71" fill="#fdfdfb"/><rect x="9" y="2" width="57" height="14" fill="#fdd03b"/><path d="M9 22h57M9 28h57M9 34h57M9 40h57M9 46h57M9 52h57M9 58h57M9 64h57" stroke="#d2d2cf" stroke-width="1.300"/></g></svg></div>
  <div class="app"><svg viewBox="0 0 76 76"><g transform="rotate(-6 38 38)"><rect x="13" y="5" width="54" height="68" rx="6" fill="#333"/><rect x="11" y="3" width="54" height="68" rx="6" fill="#fbfbfb"/><circle cx="19" cy="19" r="5" fill="#fb9027"/><circle cx="19" cy="32" r="5" fill="#24a5f4"/><circle cx="19" cy="45" r="5" fill="#63d23c"/><circle cx="19" cy="58" r="5" fill="#c46be0"/><path d="M28 12h30M28 25h30M28 38h30M28 51h30M28 64h30" stroke="#d5d5d5" stroke-width="1.200"/></g></svg></div>
  <div class="app run"><svg viewBox="0 0 76 76"><path d="M38 5a36 31 0 1 1-10 61q-6 5-14 5 5-4 5-9A34 31 0 0 1 38 5z" fill="url(#g-msg)"/><path d="M52 34a21 19 0 0 1 13 33q0 4 3 7-6 0-9-4A21 18.500 0 1 1 52 34z" fill="#f3f8fc"/><g fill="#155da6"><circle cx="41" cy="53" r="3.500"/><circle cx="52" cy="53" r="3.500"/><circle cx="63" cy="53" r="3.500"/></g></svg><b class="badge">30</b></div>
  <div class="app"><svg viewBox="0 0 76 76"><rect x="2" y="6" width="66" height="59" rx="6" fill="url(#g-ft)"/><rect x="13" y="22" width="34" height="28" rx="5" fill="#f7f7f7"/><path d="M48 33l12-9v24l-12-9z" fill="#f7f7f7"/><circle cx="58" cy="51" r="18.500" fill="#f2f5f2"/><path d="M49 42q3-4 6 1 2 3-1 5 2 5 6 8 3-2 6 1 3 3-1 6-7 3-13-6-6-9-3-15z" fill="#20c63c"/></svg></div>
  <div class="app"><svg viewBox="0 0 76 76"><circle cx="38" cy="38" r="37" fill="#1ed760"/><g fill="none" stroke="#151515" stroke-linecap="round"><path d="M17 26q23-7 44 5" stroke-width="7"/><path d="M19 38q20-6 37 5" stroke-width="6"/><path d="M20 49q17-5 32 5" stroke-width="5"/></g></svg></div>
  <div class="app"><svg viewBox="0 0 76 76"><circle cx="38" cy="38" r="37" fill="url(#g-edge)"/><g class="petals"><ellipse cx="38" cy="21" rx="10" ry="15" fill="#fb9c22"/><ellipse cx="38" cy="21" rx="10" ry="15" fill="#e4e02c" transform="rotate(45 38 38)"/><ellipse cx="38" cy="21" rx="10" ry="15" fill="#aed34c" transform="rotate(90 38 38)"/><ellipse cx="38" cy="21" rx="10" ry="15" fill="#61bd86" transform="rotate(135 38 38)"/><ellipse cx="38" cy="21" rx="10" ry="15" fill="#65a9dc" transform="rotate(180 38 38)"/><ellipse cx="38" cy="21" rx="10" ry="15" fill="#8f7dc4" transform="rotate(225 38 38)"/><ellipse cx="38" cy="21" rx="10" ry="15" fill="#cf6b9c" transform="rotate(270 38 38)"/><ellipse cx="38" cy="21" rx="10" ry="15" fill="#ed4b35" transform="rotate(315 38 38)"/></g><circle cx="38" cy="38" r="2.500" fill="#fff"/></svg></div>
  <div class="app"><svg viewBox="0 0 76 76"><circle cx="38" cy="38" r="37" fill="url(#g-ring)"/><circle cx="38" cy="38" r="33.500" fill="#f8f8fa"/><path d="M28 19l27-6v37q0 7-7 8-6 0-6-5 0-6 9-7V27l-18 4v25q0 6-7 6-6 0-6-5 0-6 8-7z" fill="url(#g-note)"/></svg></div>
  <div class="app"><svg viewBox="0 0 76 76"><circle cx="38" cy="38" r="37" fill="url(#g-edge)"/><circle cx="38" cy="38" r="34" fill="url(#g-store)"/><g stroke="#fff" stroke-width="6" stroke-linecap="round"><path d="M42 17L26 44M34 17l22 37M17 44h27M53 44h6M22 53l-1.500 2"/></g></svg></div>
  <div class="app"><svg viewBox="0 0 76 76"><rect x="1" y="4" width="74" height="68" rx="3" fill="url(#g-pref)"/><circle cx="38" cy="38" r="30" fill="#2b2c2e"/><circle cx="38" cy="38" r="24" fill="none" stroke="#b9b9ba" stroke-width="5" stroke-dasharray="3 2"/><circle cx="38" cy="38" r="20" fill="#444" stroke="#a8a9aa" stroke-width="5"/><path d="M38 38h20M38 38L28 20M38 38L28 56" stroke="#b4b4b5" stroke-width="4.500"/><circle cx="38" cy="38" r="5" fill="#c9c9ca"/></svg><b class="badge">1</b></div>
  <div class="app"><svg viewBox="0 0 76 76"><circle cx="38" cy="38" r="37" fill="url(#g-edge)"/><circle cx="38" cy="38" r="34" fill="url(#g-atom)"/><g fill="none" stroke="#f1fbf3" stroke-width="2.400"><ellipse cx="38" cy="38" rx="23" ry="9" transform="rotate(12 38 38)"/><ellipse cx="38" cy="38" rx="23" ry="9" transform="rotate(72 38 38)"/><ellipse cx="38" cy="38" rx="23" ry="9" transform="rotate(-48 38 38)"/></g><circle cx="38" cy="38" r="3" fill="#fff"/></svg></div>
  <div class="app"><svg viewBox="0 0 76 76"><rect x="2" y="6" width="72" height="63" rx="3" fill="#b9c3c9"/><rect x="3.500" y="7.500" width="69" height="60" rx="2" fill="#0c0c0c"/><rect x="7" y="11" width="62" height="52" fill="#303030"/><text x="9" y="26" class="term">&gt;_</text></svg></div>
  <div class="app"><svg viewBox="0 0 76 76"><path d="M36 0A38 38 0 0 0 36 76Q6 60 9 36 12 12 36 0z" fill="#f7942a"/><circle cx="41" cy="38" r="36.500" fill="#2b2252"/><circle cx="41" cy="43" r="21" fill="#433789"/><path d="M5 29h73M4.500 38h74M5 47h73" stroke="#fff" stroke-width="4.500"/></svg></div>
  <div class="app"><svg viewBox="0 0 76 76"><g fill="none" stroke="#43b02a"><path d="M40 3A35 35 0 1 1 14 64" stroke-width="13"/><path d="M14 64A35 35 0 0 1 40 3" stroke-width="6" stroke-dasharray="5 2"/><path d="M10 60A40 40 0 0 1 38 -1" stroke-width="3" stroke-dasharray="4 3"/></g></svg></div>
  <div class="app run"><svg viewBox="0 0 76 76"><path d="M22 38h42v33l-40 3z" fill="#f8ef87"/><path d="M32 14l42 2-2 36-40-2z" fill="#fbf392"/><path d="M0 14L38 3l12 35-39 14z" fill="#fdf49a"/><text x="15" y="21" class="scrawl" transform="rotate(-14 15 21)">LOU</text><text x="7" y="35" class="scrawl" transform="rotate(-14 7 35)">555-7361</text><path d="M11 42l30-10M14 46l24-8" stroke="#555"/><text x="47" y="34" class="scrawl red">EGGS</text><text x="33" y="62" class="scrawl">MILK</text></svg></div>
  <div class="app run"><svg viewBox="0 0 76 76"><rect width="76" height="76" fill="#f5311d"/><rect x="3.500" y="3.500" width="69" height="69" fill="#2d0b0c"/><path d="M36 16q4 2 2 12-4 15-20 32-4 2-2-3 5-7 28-13 14-3 15 1 0 4-7 2-13-6-19-24-2-8 3-7z" fill="none" stroke="#fff" stroke-width="3"/></svg></div>
  <div class="app run"><svg viewBox="0 0 76 76"><path d="M0 20l60-10 12 54-62 11z" fill="url(#g-blue)"/><g fill="none" stroke="#a8e1ff" stroke-width="1.800"><path d="M32 26L18 62M36 24l24 38M12 50l48-8M6 24l54-9M11 68l54-9"/></g><path d="M52 30l8 2-10 42q-4 4-8 0z" fill="#222"/><path d="M42 4q10-6 20-2l14 7v8l-6-2-3-6-6 3-3 19-7-2 2-19q-4-4-11-6z" fill="#d8dbdf"/></svg></div>
  <i class="divider"></i>
  <div class="app mini"><svg viewBox="0 0 80 76"><rect y="14" width="80" height="47" fill="#f8f8f9"/><path d="M0 14h80v7H0z" fill="#ececee"/><path d="M0 21h15v40H0z" fill="#e3e7ec"/><circle cx="3" cy="16.500" r="1.300" fill="#f55"/><circle cx="7" cy="16.500" r="1.300" fill="#fb3"/><path d="M3 27h9M3 32h9M3 37h9M3 42h9M3 47h9" stroke="#a9afb6" stroke-width="1"/><path d="M22 26h5M33 26h5M45 26h5M57 26h5M69 26h5M22 38h5M33 38h5M45 38h5M57 38h5M69 38h5M22 49h5M33 49h5M45 49h5M69 49h5" stroke="#7a5457" stroke-width="5"/><path d="M21 31h7M32 31h7M44 31h7M56 31h7M68 31h7M21 43h7M32 43h7M44 43h7M56 43h7M21 54h7M32 54h7" stroke="#b9b9bb"/><rect x="53" y="51" width="26" height="25" rx="2" fill="#22a3f5"/><path d="M67 51h12v25H69q-1-5-1-9h-4q0-9 3-16z" fill="#eef3f8"/><path d="M57 68q9 5 18 0M60 57v3M73 57v3" fill="none" stroke="#123" stroke-width="1.500"/></svg></div>
  <div class="app"><svg viewBox="0 0 76 76"><path d="M10 12l8-12 8 6 8-8 10 6 12-4 12 12-4 6H14z" fill="#eee"/><path d="M20 3l8 8M34 0l-6 12M44 5l10 8M56 3l-6 10" stroke="#444" stroke-width="3"/><circle cx="33" cy="12" r="3" fill="#35a"/><circle cx="47" cy="10" r="3" fill="#b53"/><path d="M8 10q30 10 60 0l-7 61q-1 4-6 4H21q-5 0-6-4z" fill="url(#g-can)" opacity=".94"/><path d="M20 28l6 40M36 32l2 38M54 28l-6 40" stroke="#fff" stroke-width="3" opacity=".35"/></svg></div>
</footer>
</body>
</html>
```
FILE: styles.css
```css
* { box-sizing: border-box; }
html, body { margin: 0; width: 2560px; height: 1600px; overflow: hidden; }
body {
  position: relative;
  display: flex; flex-direction: column; gap: 2px;
  font-family: Inter, "Liberation Sans", sans-serif;
  background: linear-gradient(90deg, #8fa3c6 0, #5f7190 3%, #4c535c 30%, #4c535c 60%, #9fb6de 97%, #b4cdf3 100%) 0 1480px / 2560px 120px no-repeat, #3c4655;
}
.defs { position: absolute; }
i { font-style: normal; }
s, u { text-decoration: none; }
ul, h2, h3 { margin: 0; padding: 0; list-style: none; font-weight: 400; }
svg { flex: none; display: block; }

/* menu bar */
.menubar {
  flex: none; height: 44px; display: flex; align-items: center; padding: 0 46px 0 42px;
  background: linear-gradient(90deg, #e2ebfb 0, #e1ebfa 20%, #dbe6ee 38%, #dfe9f1 45%, #e5eefc 62%, #dde5f1 70%, #e4edfa 80%, #e2e9f4 92%, #d3dce0 100%);
  color: #2a313d; font-size: 28px;
}
.apple { width: 26px; height: 32px; margin-top: -4px; }
.menus { display: flex; gap: 38px; margin-left: 41px; letter-spacing: -.62px; }
.menus b { font-weight: 700; letter-spacing: -.1px; }
.status { display: flex; align-items: center; margin-left: auto; }
.s-cc { margin-top: -2px; }
.s-air { margin-left: 26px; }
.s-wifi { margin-left: 22px; }
.s-pct { width: 49px; margin-left: 24px; font-size: 24px; letter-spacing: -1px; white-space: nowrap; }
.s-bat { margin-left: 10px; }
.s-time { width: 173px; margin-left: 35px; white-space: nowrap; letter-spacing: -.2px; }
.s-find { margin-left: 42px; }
.s-siri { margin-left: 34px; }
.s-list { margin-left: 24px; }

/* browser window */
.window { flex: none; height: 1446px; border-radius: 10px; overflow: hidden; background: #f2f2f2; display: flex; flex-direction: column; box-shadow: 0 6px 30px rgba(0,0,0,.5); }
.tabstrip { flex: none; height: 74px; display: flex; align-items: flex-end; padding-right: 20px; background: linear-gradient(90deg, #d9dadc, #d7d9da 45%, #dadbdd 75%, #d6d8da); border-bottom: 2px solid #a2a3a4; }
.lights { display: flex; gap: 16px; width: 144px; padding: 0 0 22px 24px; }
.lights i { width: 24px; height: 24px; border-radius: 50%; border: 1px solid #0002; }
.red { background: #fc5b57; } .amber { background: #fdbc40; } .green { background: #33c748; }
.tab { position: relative; flex: none; width: 484px; height: 57px; margin: 0 -28px -2px 0; padding: 0 35px 1px 32px; display: flex; align-items: center; font-size: 24px; color: #111; }
.tab.active { z-index: 2; }
.shape { position: absolute; inset: 0; width: 484px; height: 57px; }
.fav { position: relative; width: 32px; height: 32px; }
.active .fav { margin-right: 1px; }
.label { position: relative; flex: 1; margin: 0 14px 0 12px; white-space: nowrap; letter-spacing: -.15px; }
.active .label { margin-left: 11px; letter-spacing: .07px; }
.plain .label { margin-left: 4px; }
.fade { -webkit-mask-image: linear-gradient(90deg, #000 calc(100% - 62px), #0002 calc(100% - 4px)); mask-image: linear-gradient(90deg, #000 calc(100% - 62px), #0002 calc(100% - 4px)); }
.x { position: relative; width: 16px; height: 16px; margin-right: -1px; stroke: #5a5a5a; stroke-width: 2.400; }
.newtab { width: 66px; height: 32px; margin: 0 0 8px 22px; }
.person { width: 32px; height: 32px; margin: 0 0 18px auto; }

.toolbar { flex: none; height: 73px; display: flex; align-items: center; padding: 0 33px 0 22px; }
.nav-i { width: 28px; height: 28px; }
.fwd { margin-left: 29px; } .rel { margin-left: 28px; width: 27px; }
.omnibox { width: 2198px; height: 54px; margin-left: 23px; border: 2px solid #b4b5b6; border-radius: 6px; background: #fff; display: flex; align-items: center; padding: 0 12px 0 17px; font-size: 28px; white-space: nowrap; }
.lock { width: 16px; height: 22px; }
.secure { width: 91px; margin-left: 16px; color: #208039; letter-spacing: -.4px; }
.bar { width: 1px; height: 32px; margin: 0 12px 0 12px; background: #aaa; }
.url { color: #808080; letter-spacing: -.37px; }
.url em { font-style: normal; color: #208039; } .url b { font-weight: 400; color: #000; }
.star { width: 30px; height: 30px; margin-left: auto; }
.ext { position: relative; width: 40px; height: 40px; margin: 5px 0 0 22px; }
.ext svg { width: 32px; height: 32px; }
.ext b { position: absolute; right: 0; bottom: 0; width: 25px; height: 25px; border-radius: 4px; background: #757575; color: #fff; font: 600 19px/26px Inter, sans-serif; text-align: center; }
.ext.orange { margin-left: 15px; }
.ext.orange b { width: 32px; background: #94cd96; font-size: 20px; letter-spacing: -.6px; }
.dots { width: 6px; height: 28px; margin-left: auto; fill: #5c6065; }
.bookmarks { flex: none; height: 47px; border-bottom: 2px solid #b8b8b9; display: flex; align-items: center; padding: 0 0 9px 27px; font-size: 24px; letter-spacing: -.08px; color: #000; }
.bookmarks span { white-space: nowrap; }
.apps { width: 26px; height: 26px; margin-right: 11px; }
.bm-i { width: 32px; height: 32px; margin: 0 8px 0 26px; }
.bm-i.fb, .bm-i.wy { margin-left: 27px; }

/* course sidebar */
.content { flex: none; height: 1164px; display: flex; font-family: "Open Sans", sans-serif; }
.sidebar { width: 960px; background: #f1f3f5; display: flex; flex-direction: column; color: #686f7a; }
.search { flex: none; display: flex; height: 88px; margin: 16px 40px 20px; }
.field { flex: 1; border: 2px solid #c8cacd; border-right: 0; background: #fff; padding-left: 24px; font-size: 32px; line-height: 84px; }
.go { width: 80px; background: #0f7690; border-radius: 0 4px 4px 0; display: flex; align-items: center; justify-content: center; }
.go svg { width: 28px; height: 28px; margin-top: 4px; }
.scroll { flex: 1; min-height: 0; display: flex; justify-content: space-between; overflow: hidden; }
.cards { width: 930px; padding: 30px 20px 0; display: flex; flex-direction: column; gap: 39.600px; }
.card { flex: none; min-height: 172px; padding: 37px 40px 39.200px; background: #fff; box-shadow: 0 2px 6px rgba(20,23,28,.2), 0 0 2px rgba(20,23,28,.15); display: grid; grid-template-columns: 1fr auto; }
.card small { font-size: 26px; line-height: 43px; letter-spacing: -.2px; }
.count { font-size: 30px; line-height: 48px; height: 45px; }
.card h2 { grid-column: 1 / 3; font-size: 36px; line-height: 50.400px; font-weight: 600; }
.track { width: 29px; background: #fafafa; border-left: 2px solid #e7e7e8; }

/* video player */
.player { position: relative; width: 1600px; display: flex; flex-direction: column; background: #15181e; }
.p-head { flex: none; height: 132px; background: linear-gradient(#1a1d25, #252933); display: flex; justify-content: space-between; padding: 43px 54px 0 53px; color: #cfd0d3; font-size: 30px; line-height: 44px; font-weight: 600; }
.p-x { width: 22px; height: 22px; margin-top: -1px; }
.video { position: relative; flex: none; height: 900px; padding: 0 34px 0 33px; overflow: hidden; background: #535457; }
.sheet { height: 900px; overflow: hidden; background: #fff; border-left: 2px solid #434446; border-right: 2px solid #434446; padding: 0 179px; font: 23px "Liberation Sans", "DejaVu Sans", sans-serif; color: #66666f; -webkit-text-stroke: .45px; filter: blur(.8px); }
.shade { position: absolute; inset: 0; background: linear-gradient(rgba(20,23,28,.3), rgba(20,23,28,.18) 4%, rgba(20,23,28,.04) 9%, transparent 13%, transparent 96%, rgba(20,23,28,.05)); }
.legend { height: 69px; border-bottom: 3px solid #dcdcdf; display: grid; grid-template-columns: 234px 245px 201px 256px 1fr; padding: 18px 0 0 60px; font-size: 25px; line-height: 34px; white-space: nowrap; color: #55555b; }
.legend k { margin-left: 9px; }
.columns { display: flex; justify-content: space-between; padding-top: 29px; }
.col { width: 329px; }
.col h3 { height: 48px; border-bottom: 3px solid #9db6c9; padding-left: 4px; font-size: 32px; line-height: 45px; letter-spacing: -.4px; color: #41709f; white-space: nowrap; -webkit-text-stroke: .1px; }
.col li { height: 37.8px; border-bottom: 3px solid #ebecee; padding: 2px 5px 0 10px; display: flex; justify-content: space-between; align-items: center; white-space: nowrap; line-height: 23px; letter-spacing: -.1px; }
.col li k { letter-spacing: .5px; margin-right: -.5px; }
.col li:nth-child(even) { background: #f6f7fa; }
.col li.tall { height: 65px; }
.col u, .legend u { font: 26px/20px "DejaVu Sans", sans-serif; letter-spacing: -.5px; }
.col s { font: 21px/20px "DejaVu Sans", sans-serif; -webkit-text-stroke: .6px; }
.col s.v { margin: 0 -2px; }
.tight li { height: 37.200px; }
.gap-a { margin-top: 75px; } .gap-b { margin-top: 27px; } .gap-c { margin-top: 36px; } .gap-d { margin-top: 26px; }
.gap-a.gap-a, .gap-d.gap-d { line-height: 47px; }
.mark { position: absolute; left: 1443px; top: 836px; display: flex; gap: 8px; align-items: center; color: #fff; font-size: 25.500px; line-height: 40px; font-weight: 600; letter-spacing: -1px; filter: drop-shadow(1px 2px 2px rgba(0,0,0,.35)); opacity: .85; }
.mark svg { width: 52px; height: 42px; }
.controls { flex: none; height: 132px; background: linear-gradient(#272c38, #1b1f28 50%, #14161b); padding: 16px 26px 0; }
.progress { position: relative; height: 12px; background: #8c8f99; display: flex; }
.played { width: 432px; background: #ea5252; } .loaded { width: 182px; background: #a9acb2; }
.knob { position: absolute; left: 418px; top: -6px; width: 12px; height: 24px; border-radius: 6px; background: #6a6f7b; }
.buttons { height: 97px; display: flex; align-items: center; fill: #cfd0d4; padding-left: 22px; color: #fff; }
.c-rew { margin-left: 51px; }
.rate { width: 72px; height: 36px; margin-left: 25px; border-radius: 4px; background: #c9cad0; color: #23272f; font-size: 27px; line-height: 36px; text-align: center; }
.rate small { font-size: 24px; margin-left: 2px; }
.c-fwd { margin-left: 26px; }
.now { width: 73px; margin-left: 28px; font-size: 26px; font-weight: 600; }
.total { width: 68px; font-size: 26px; font-weight: 600; white-space: nowrap; }
.now, .total { letter-spacing: -.4px; padding-top: 2px; }
.c-help { margin-left: 208px; margin-top: 3px; }
.c-mark { margin-left: 55px; }
.c-next { margin-left: 468px; }
.c-vol { margin-left: 46px; }
.cc { width: 40px; height: 33px; margin-left: 27px; border-radius: 4px; background: #cfd0d4; color: #1b1f28; font-size: 24px; font-weight: 700; line-height: 33px; text-align: center; }
.c-gear { margin-left: 27px; }
.c-full { margin-left: 29px; }
.tip { position: absolute; left: 32px; top: 106px; width: 338px; height: 70px; border-radius: 4px; background: rgba(15,120,146,.82); color: #fff; font-size: 27px; line-height: 68px; font-weight: 600; display: flex; align-items: center; gap: 17px; padding: 0 0 1px 27px; letter-spacing: -.48px; white-space: nowrap; }
.tip svg { width: 28px; height: 23px; }
.tip::before { content: ""; position: absolute; left: 24px; top: -10px; border: 10px solid transparent; border-top: 0; border-bottom-color: rgba(15,120,146,.85); }

/* download shelf */
.downloads { flex: none; height: 88px; border-top: 2px solid #b0b0b1; background: linear-gradient(#f2f2f2, #e9e9e9 60%, #dfdfdf); display: flex; align-items: center; padding: 0 38px 2px 36px; font-size: 24px; color: #000; }
.zip { width: 25px; height: 32px; }
.zip text { font: 8px "Liberation Sans", sans-serif; fill: #555; }
.file { width: 335px; margin-left: 35px; white-space: nowrap; letter-spacing: -.05px; }
.narrow { letter-spacing: -.25px; }
.more { display: flex; gap: 2px; } .more i { width: 6px; height: 6px; border-radius: 50%; background: #6b6b6b; }
.sep { width: 2px; height: 56px; margin: 0 36px 0 35px; background: #c3c3c3; }
.showall { width: 164px; height: 56px; margin-left: auto; border: 2px solid #b2b3b4; border-radius: 7px; background: linear-gradient(#fff, #f4f4f4); text-align: center; line-height: 52px; font-weight: 500; color: #5d5d5f; }
.dl-x { width: 20px; height: 20px; margin-left: 38px; }

/* window peeking in from the right */
.popup { position: absolute; left: 2455px; top: 521px; width: 140px; height: 314px; border: 1px solid #aeaeb0; border-radius: 12px; background: #ececec; box-shadow: 0 14px 50px rgba(0,0,0,.5); }
.pop-bar { height: 44px; border-radius: 11px 11px 0 0; background: #f6f6f6; border-bottom: 2px solid #d2d2d3; }
.pop-icon { width: 117px; height: 117px; margin: 37px 0 0 54px; border-radius: 28px; background: #fff; box-shadow: 0 0 0 1.500px #dcdcdd; }
.pop-icon svg { width: 50px; height: 116px; }

/* dock */
.dock { position: relative; flex: none; width: 2420px; height: 106px; margin-left: 70px; padding: 12px 0 0 6px; border-radius: 10px 10px 0 0; display: flex; background: linear-gradient(90deg, #7b8b9b 0, #6f8699 8%, #5f777c 17%, #5c6f74 24%, #5d5b59 32%, #5b5f59 42%, #595959 55%, #67655f 62%, #7a766a 69%, #6b7a7c 74%, #8497b2 81%, #a3b4d6 87%, #aabde4 96%, #a0b3da 100%); box-shadow: inset 0 1px 0 #ffffff30; }
.app { position: relative; flex: none; width: 87.780px; height: 94px; display: flex; justify-content: center; }
.app svg { width: 76px; height: 76px; overflow: visible; filter: drop-shadow(0 2px 2px rgba(0,0,0,.3)); }
.petals { isolation: isolate; opacity: .92; }
.petals ellipse { mix-blend-mode: multiply; }
.run::after { content: ""; position: absolute; left: 40px; top: 82px; width: 8px; height: 8px; border-radius: 50%; background: #0b1119; }
.badge { position: absolute; left: 55px; top: -5px; width: 33px; height: 33px; border-radius: 50%; background: #f23f3a; color: #fff; font-size: 20px; font-weight: 500; line-height: 33px; text-align: center; letter-spacing: -.5px; box-shadow: 0 1px 3px #0006; }
.divider { width: 2px; height: 78px; margin: 2px 18px 0 18px; background: #7286ad; }
.mini svg { width: 80px; }
.pages { font: 600 11px Inter, sans-serif; fill: #fff; }
.month { font: 500 15px Inter, sans-serif; fill: #fff; }
.day { font: 300 37px Inter, sans-serif; fill: #222; }
.term { font: 700 21px "Liberation Mono", monospace; fill: #fff; }
.scrawl { font: italic 9px "Liberation Sans", sans-serif; fill: #3b3b46; }
.scrawl.red { fill: #e0362c; }
```
